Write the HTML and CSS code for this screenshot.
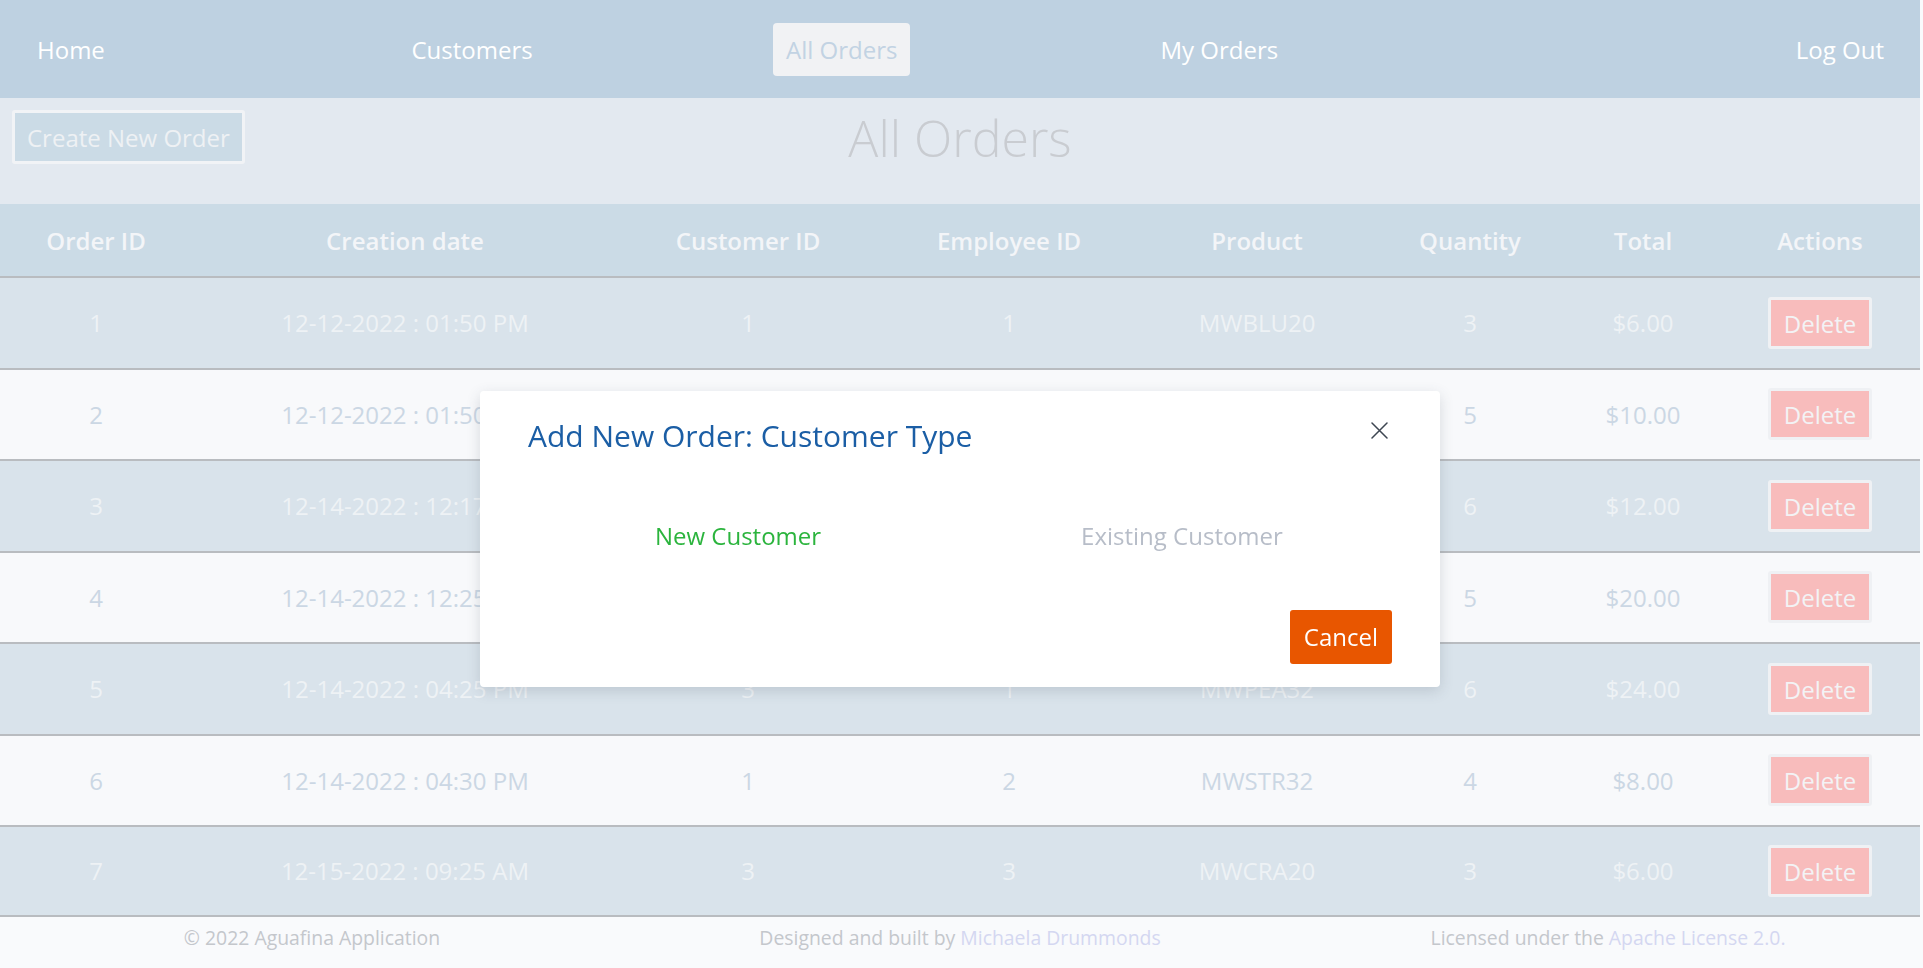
FILE: index.html
```html
<!DOCTYPE html>
<html lang="en">
<head>
<meta charset="utf-8">
<title>All Orders</title>
<link rel="stylesheet" href="styles.css">
</head>
<body>
<div class="app">
  <nav class="nav">
    <a class="nav-link" href="#">Home</a>
    <a class="nav-link" href="#">Customers</a>
    <a class="nav-link active" href="#">All Orders</a>
    <a class="nav-link" href="#">My Orders</a>
    <a class="nav-link logout" href="#">Log Out</a>
  </nav>

  <header class="subheader">
    <div class="sub-left"><button class="create-btn">Create New Order</button></div>
    <h1 class="page-title">All Orders</h1>
    <div class="sub-right"></div>
  </header>

  <table class="orders">
    <colgroup>
      <col class="c1"><col class="c2"><col class="c3"><col class="c4"><col class="c5"><col class="c6"><col class="c7"><col class="c8">
    </colgroup>
    <thead>
      <tr><th>Order ID</th><th>Creation date</th><th>Customer ID</th><th>Employee ID</th><th>Product</th><th>Quantity</th><th>Total</th><th>Actions</th></tr>
    </thead>
    <tbody>
      <tr><td>1</td><td>12-12-2022 : 01:50 PM</td><td>1</td><td>1</td><td>MWBLU20</td><td>3</td><td>$6.00</td><td><button class="del-btn">Delete</button></td></tr>
      <tr><td>2</td><td>12-12-2022 : 01:50 PM</td><td>2</td><td>1</td><td>MWBLU20</td><td>5</td><td>$10.00</td><td><button class="del-btn">Delete</button></td></tr>
      <tr><td>3</td><td>12-14-2022 : 12:17 PM</td><td>2</td><td>2</td><td>MWBLU20</td><td>6</td><td>$12.00</td><td><button class="del-btn">Delete</button></td></tr>
      <tr><td>4</td><td>12-14-2022 : 12:25 PM</td><td>1</td><td>1</td><td>MWPEA32</td><td>5</td><td>$20.00</td><td><button class="del-btn">Delete</button></td></tr>
      <tr><td>5</td><td>12-14-2022 : 04:25 PM</td><td>3</td><td>1</td><td>MWPEA32</td><td>6</td><td>$24.00</td><td><button class="del-btn">Delete</button></td></tr>
      <tr><td>6</td><td>12-14-2022 : 04:30 PM</td><td>1</td><td>2</td><td>MWSTR32</td><td>4</td><td>$8.00</td><td><button class="del-btn">Delete</button></td></tr>
      <tr><td>7</td><td>12-15-2022 : 09:25 AM</td><td>3</td><td>3</td><td>MWCRA20</td><td>3</td><td>$6.00</td><td><button class="del-btn">Delete</button></td></tr>
    </tbody>
  </table>

  <footer class="footer">
    <div>© 2022 Aguafina Application</div>
    <div>Designed and built by <a href="#">Michaela Drummonds</a></div>
    <div>Licensed under the <a href="#">Apache License 2.0.</a></div>
  </footer>
</div>

<div class="modal" role="dialog">
  <div class="modal-header">
    <h5 class="modal-title">Add New Order: Customer Type</h5>
    <button class="close-btn" aria-label="Close">
      <svg width="17" height="17" viewBox="0 0 17 17"><path d="M1 1 L16 16 M16 1 L1 16" stroke="#3e4652" stroke-width="1.5" fill="none" stroke-linecap="round"/></svg>
    </button>
  </div>
  <div class="modal-body">
    <a class="opt opt-new" href="#">New Customer</a>
    <a class="opt opt-existing" href="#">Existing Customer</a>
  </div>
  <div class="modal-footer">
    <button class="cancel-btn">Cancel</button>
  </div>
</div>
</body>
</html>
```
FILE: styles.css
```css
* { box-sizing: border-box; }
html { background: #f9fafc; }
body {
  margin: 0;
  font-family: "Open Sans", "Noto Sans", sans-serif;
  font-size: 24px;
  background: #f9fafc;
  overflow: hidden;
}
.app { width: 1920px; }

/* nav */
.nav {
  height: 98px;
  background: #bed1e1;
  display: grid;
  grid-template-columns: 374.5px 374.5px 374.5px 1fr 1fr;
  align-items: center;
  padding: 0 23px 0 24px;
}
.nav-link {
  justify-self: start;
  color: #ffffff;
  text-decoration: none;
  padding: 10px 13px;
  line-height: 33px;
  border-radius: 4px;
}
.nav-link.active { background: #f1f2f4; color: #c2d3e3; }
.nav-link.logout { justify-self: end; }

/* subheader */
.subheader {
  height: 106px;
  background: #e3e9f0;
  display: grid;
  grid-template-columns: 1fr auto 1fr;
  align-items: start;
  padding: 12px;
}
.create-btn {
  font-family: inherit;
  font-size: 24px;
  line-height: 33px;
  padding: 8px 12px 7px;
  background: #cbdbe6;
  color: #eef1f4;
  border: 3px solid #f1f3f6;
  border-radius: 3px;
}
.page-title {
  margin: 0;
  font-size: 50px;
  font-weight: 300;
  line-height: 56px;
  color: #c9ccd1;
}

/* table */
.orders {
  width: 1920px;
  table-layout: fixed;
  border-collapse: separate;
  border-spacing: 0;
}
.c1 { width: 192px; } .c2 { width: 426px; } .c3 { width: 260px; } .c4 { width: 262px; }
.c5 { width: 234px; } .c6 { width: 192px; } .c7 { width: 154px; } .c8 { width: 200px; }
.orders th {
  height: 72px;
  padding: 0;
  background: #cbdbe6;
  color: #f3f5f8;
  font-weight: 600;
  text-align: center;
}
.orders td {
  height: 91.5px;
  padding: 0;
  text-align: center;
  border-top: 2px solid #b9bcc0;
}
.orders tbody tr:last-child td { border-bottom: 2px solid #b9bcc0; }
.orders tbody tr:nth-child(odd) td { background: #d9e3eb; color: #eef2f5; }
.orders tbody tr:nth-child(even) td { background: #f8f9fb; color: #cbd7e4; }
.del-btn {
  font-family: inherit;
  font-size: 24px;
  line-height: 34px;
  padding: 7px 13px 5px;
  background: #f8bcbc;
  color: #f3f3f5;
  border: 3px solid #eff1f4;
  border-radius: 3px;
}

/* footer */
.footer {
  display: grid;
  grid-template-columns: 1fr 1fr 1fr;
  margin: 0 -12px;
  text-align: center;
  font-size: 19.4px;
  color: #c4c7cc;
  padding-top: 7px;
}
.footer a { color: #d4d7f1; text-decoration: none; }

/* modal */
.modal {
  position: fixed;
  top: 391px;
  left: 480px;
  width: 960px;
  background: #ffffff;
  border-radius: 4px;
  box-shadow: 0 4px 14px rgba(60, 70, 90, 0.18);
  padding: 24px 48px 23px;
}
.modal-header {
  display: flex;
  justify-content: space-between;
  align-items: flex-start;
}
.modal-title {
  margin: 0;
  font-size: 30px;
  font-weight: 400;
  line-height: 41px;
  color: #1b5ea5;
}
.close-btn {
  margin: 7px 4px 0 0;
  padding: 0;
  border: 0;
  background: none;
  width: 17px;
  height: 17px;
  display: block;
}
.close-btn svg { display: block; }
.modal-body {
  margin: 63px -12px 0;
  display: grid;
  grid-template-columns: 1fr 1fr;
  text-align: center;
  line-height: 33px;
}
.opt { text-decoration: none; }
.opt-new { color: #2bb43d; }
.opt-existing { color: #b7bdc8; }
.modal-footer {
  margin-top: 58px;
  display: flex;
  justify-content: flex-end;
}
.cancel-btn {
  font-family: inherit;
  font-size: 24px;
  line-height: 34px;
  padding: 10px 14px;
  background: #e85600;
  color: #ffffff;
  border: 0;
  border-radius: 3px;
}
```
